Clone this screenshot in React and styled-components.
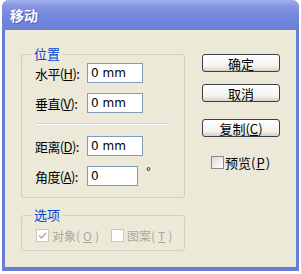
import React from 'react'
import styled, { createGlobalStyle } from 'styled-components'

const Global = createGlobalStyle`
  html, body { margin: 0; padding: 0; background: #ffffff; }
  body { width: 301px; height: 274px; overflow: hidden; }
`

function Check({ checked, disabled }) {
  return (
    <Box $disabled={disabled}>
      {checked && (
        <svg width="9" height="9" viewBox="0 0 9 9">
          <path d="M1 4.5 L3.5 7 L8 2" fill="none" stroke={disabled ? '#b4b2a4' : '#21a121'} strokeWidth="1.6" />
        </svg>
      )}
    </Box>
  )
}

function Field({ label, hot, value, width, unit }) {
  return (
    <Row>
      <Label>{label}(<u>{hot}</u>):</Label>
      <Input $w={width}>{value}</Input>
      {unit && <Unit>{unit}</Unit>}
    </Row>
  )
}

export default function App() {
  return (
    <>
      <Global />
      <Window>
        <TitleBar>移动</TitleBar>
        <Body>
          <LeftCol>
            <Group $h={144}>
              <Legend>位置</Legend>
              <Field label="水平" hot="H" value="0 mm" width={56} />
              <Field label="垂直" hot="V" value="0 mm" width={56} />
              <Separator />
              <Field label="距离" hot="D" value="0 mm" width={56} />
              <Field label="角度" hot="A" value="0" width={51} unit="°" />
            </Group>
            <Group $h={36} $options>
              <Legend>选项</Legend>
              <OptionRow>
                <Option $disabled>
                  <Check checked disabled />
                  对象(<u>O</u>)
                </Option>
                <Option $disabled>
                  <Check disabled />
                  图案(<u>T</u>)
                </Option>
              </OptionRow>
            </Group>
          </LeftCol>
          <RightCol>
            <Button>确定</Button>
            <Button $gap={12}>取消</Button>
            <Button $gap={17}>复制(<u>C</u>)</Button>
            <Preview>
              <Check />
              预览(<u>P</u>)
            </Preview>
          </RightCol>
        </Body>
      </Window>
    </>
  )
}

const Window = styled.div`
  margin-left: 2px;
  width: 297px;
  height: 271px;
  box-sizing: border-box;
  display: flex;
  flex-direction: column;
  background: #ece9d8;
  border: 3px solid #6a7dd6;
  border-top: none;
  border-bottom-width: 4px;
  border-radius: 7px 7px 0 0;
  font-family: "Liberation Sans", "Noto Sans CJK SC", sans-serif;
  font-size: 12px;
  color: #000;
`

const TitleBar = styled.div`
  height: 30px;
  margin: 0 -3px;
  box-sizing: border-box;
  padding: 6px 0 0 8px;
  border-radius: 7px 7px 0 0;
  background: linear-gradient(to bottom, #a3b1ee 0%, #8696e2 20%, #7285dc 60%, #6c80d8 100%);
  color: #fff;
  font-family: "Noto Sans CJK SC", sans-serif;
  font-weight: bold;
  font-size: 14px;
  line-height: 18px;
  text-shadow: 1px 1px 0 #4e5fb4;
`

const Body = styled.div`
  flex: 1;
  display: flex;
  padding: 24px 0 0 16px;
`

const LeftCol = styled.div`
  width: 164px;
  display: flex;
  flex-direction: column;
  gap: 17px;
`

const Group = styled.div`
  position: relative;
  height: ${p => p.$h}px;
  box-sizing: border-box;
  border: 1px solid #d0d0bf;
  border-radius: 3px;
  padding: ${p => (p.$options ? '11px 0 0 14px' : '8px 0 0 13px')};
  display: flex;
  flex-direction: column;
  gap: 10px;
`

const Legend = styled.span`
  position: absolute;
  top: -9px;
  left: 9px;
  padding: 0 3px;
  background: #ece9d8;
  color: #0046d5;
  font-family: "Noto Sans CJK SC", sans-serif;
  font-size: 13px;
  line-height: 16px;
`

const Row = styled.div`
  display: flex;
  align-items: center;
  height: 20px;
`

const Label = styled.span`
  width: 52px;
  flex: none;
  font-family: "Noto Sans CJK SC", sans-serif;
  font-size: 13px;
  white-space: nowrap;
  letter-spacing: -0.6px;
`

const Input = styled.div`
  width: ${p => p.$w}px;
  height: 20px;
  box-sizing: border-box;
  border: 1px solid #7f9db9;
  background: #fff;
  padding: 2px 0 0 3px;
  font-family: "DejaVu Sans", sans-serif;
  font-size: 12px;
  line-height: 15px;
`

const Unit = styled.span`
  margin: -8px 0 0 8px;
  font-size: 12px;
`

const Separator = styled.div`
  height: 0;
  width: 131px;
  margin: 0 0 1px 2px;
  border-top: 1px solid #d0d0bf;
  border-bottom: 1px solid #fff;
`

const OptionRow = styled.div`
  display: flex;
  align-items: center;
  gap: 12px;
`

const Option = styled.span`
  display: flex;
  align-items: center;
  gap: 3px;
  font-family: "Noto Sans CJK SC", sans-serif;
  font-size: 12px;
  color: ${p => (p.$disabled ? '#aca899' : '#000')};
`

const Box = styled.span`
  width: 13px;
  height: 13px;
  box-sizing: border-box;
  display: inline-flex;
  align-items: center;
  justify-content: center;
  border: 1px solid ${p => (p.$disabled ? '#cac8bb' : '#8a8a8a')};
  background: ${p => (p.$disabled ? '#fff' : 'linear-gradient(135deg, #dcdcd7, #ffffff)')};
`

const RightCol = styled.div`
  margin-left: 17px;
  display: flex;
  flex-direction: column;
  width: 78px;
`

const Button = styled.div`
  margin-top: ${p => p.$gap || 0}px;
  height: 18px;
  box-sizing: border-box;
  border: 1px solid #3a3f48;
  border-radius: 3px;
  background: linear-gradient(to bottom, #ffffff 0%, #f4f3ee 70%, #d6d0c5 100%);
  display: flex;
  align-items: center;
  justify-content: center;
  font-family: "Noto Sans CJK SC", sans-serif;
  font-size: 13px;
`

const Preview = styled.div`
  margin: 16px 0 0 9px;
  display: flex;
  align-items: center;
  gap: 1px;
  font-family: "Noto Sans CJK SC", sans-serif;
  font-size: 13px;
`
